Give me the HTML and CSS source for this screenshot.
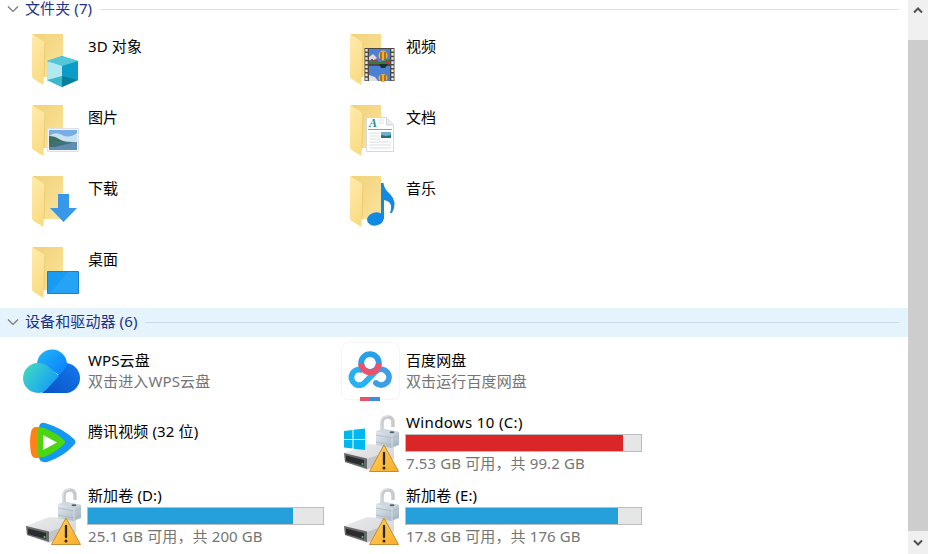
FILE: index.html
```html
<!DOCTYPE html>
<html lang="zh-CN">
<head>
  <meta charset="UTF-8">
  <title>此电脑</title>
  <link rel="stylesheet" href="styles.css">
</head>
<body>
  <!-- shared icon parts -->
  <svg class="defs" width="0" height="0">
    <defs>
      <linearGradient id="folderBack" x1="0" y1="0" x2="1" y2="1">
        <stop offset="0" stop-color="#f1d27a"/>
        <stop offset="1" stop-color="#fbe39a"/>
      </linearGradient>
      <linearGradient id="folderFront" x1="0" y1="0" x2="0.4" y2="1">
        <stop offset="0" stop-color="#ffebad"/>
        <stop offset="1" stop-color="#fadc85"/>
      </linearGradient>
      <linearGradient id="driveTop" x1="0" y1="0" x2="1" y2="1">
        <stop offset="0" stop-color="#ebecee"/>
        <stop offset="1" stop-color="#d0d2d5"/>
      </linearGradient>
      <linearGradient id="lockBody" x1="0" y1="0" x2="1" y2="1">
        <stop offset="0" stop-color="#e6edf2"/>
        <stop offset="1" stop-color="#a3b2be"/>
      </linearGradient>
      <linearGradient id="warnFill" x1="0" y1="0" x2="1" y2="1">
        <stop offset="0" stop-color="#ffd25a"/>
        <stop offset="1" stop-color="#f9ad2c"/>
      </linearGradient>
      <symbol id="folder" viewBox="0 0 64 64">
        <path d="M13 6H43V49H23Z" fill="url(#folderBack)"/>
        <path d="M23 49h4v5l-3 2z" fill="#fff"/>
        <path d="M12 6L23 13Q25 14 25 17L23.500 57L13.500 51Q12 50 12 48Z" fill="url(#folderFront)"/>
        <path d="M25 15L24 49" stroke="#e6c46c" stroke-width=".7"/>
      </symbol>
      <symbol id="drive" viewBox="0 0 64 64">
        <path d="M6 42L29 33L56 35V48L29 59L7 51Z" fill="url(#driveTop)"/>
        <path d="M29 48L40 44V54L29 58Z" fill="#c3c5c8"/>
        <path d="M6 42L29 47.500V58L7 51Z" fill="#66686a"/>
        <path d="M8 44.500L26 49V55L8 50Z" fill="#2a2c2e"/>
        <circle cx="24.500" cy="53" r="1" fill="#57c56b"/>
        <path d="M44 19V12Q44 6 50 6Q55 6 55 12V16" fill="none" stroke="#c8cbce" stroke-width="3.500"/>
        <path d="M43 18V12Q43 5 50 5" fill="none" stroke="#e4e6e8" stroke-width="1"/>
        <path d="M38 20L47 18L61 21V34L53 37L38 34Z" fill="url(#lockBody)"/>
        <path d="M38 20L47 18L61 21L54 23.500Z" fill="#cfd8df"/>
        <path d="M38 24L54 27L61 24.500M38 31L54 34L61 31.500" fill="none" stroke="#a3b4c1" stroke-width=".7"/>
        <path d="M54 24V36" stroke="#dbe6ee" stroke-width=".8"/>
        <ellipse cx="54" cy="21.300" rx="2.500" ry="1" fill="#4d6172"/>
        <path d="M46 34L60.500 60.500H31.500Z" fill="url(#warnFill)" stroke="#c88b31" stroke-linejoin="round"/>
        <path d="M46 42V53" stroke="#292522" stroke-width="2.300" stroke-linecap="round"/>
        <circle cx="46" cy="57" r="1.500" fill="#292522"/>
      </symbol>
    </defs>
  </svg>

  <div class="window">
    <main class="content">
      <div class="group-header">
        <svg class="chevron" viewBox="0 0 12 8"><path d="M1 1.500L6 6.500L11 1.500"/></svg>
        <h2>文件夹 (7)</h2>
        <span class="line"></span>
      </div>

      <div class="grid folders">
        <div class="tile">
          <svg class="icon" viewBox="0 0 64 64">
            <use href="#folder"/>
            <path d="M42 28L58 33V52L42 59L27 52V33Z" fill="#24a7c3"/>
            <path d="M27 33L42 37V49L27 53Z" fill="#b2e9f0"/>
            <path d="M42 37L58 33V52L42 49Z" fill="#0b9cc8"/>
            <path d="M27 33L42 28L58 33L42 38Z" fill="#54c6da"/>
            <path d="M27 52L42 48V59Z" fill="#3bb9ca"/>
            <path d="M42 48L58 52L42 59Z" fill="#087e9d"/>
          </svg>
          <div class="info"><div class="name">3D 对象</div></div>
        </div>

        <div class="tile">
          <svg class="icon" viewBox="0 0 64 64">
            <use href="#folder"/>
            <path d="M26.500 20H56.500V53H26.500Z" fill="#4b4845"/>
            <path d="M31 21H52V36H31ZM31 38H52V53H31Z" fill="#4b80d4"/>
            <path d="M31 33L36 31L41 34L52 31V36H31Z" fill="#377b43"/>
            <path d="M31 47L37 49L40 53H31Z" fill="#dce1ea"/>
            <path d="M31 29L35 26L39 30L36 32L31 32Z" fill="#e6d5dc"/>
            <path d="M33 32h2M38 33h2M47 34h4" stroke="#cc2849" stroke-width="1.800"/>
            <ellipse cx="45" cy="27.500" rx="4.500" ry="5" fill="#edb42e"/>
            <path d="M43 24v8M47 24v8" stroke="#7a291d"/>
            <ellipse cx="45" cy="50" rx="4.500" ry="4" fill="#edb42e"/>
            <path d="M43 47v6M47 47v6" stroke="#7a291d"/>
            <path d="M41 36h9l-3 4h-4z" fill="#17342b"/>
            <path d="M28.500 21V53M54.500 21V53" stroke="#e9e7e0" stroke-width="2.400" stroke-dasharray="2.600 1.500"/>
          </svg>
          <div class="info"><div class="name">视频</div></div>
        </div>

        <div class="tile">
          <svg class="icon" viewBox="0 0 64 64">
            <use href="#folder"/>
            <path d="M27.500 29.500H58.500V52.500H27.500Z" fill="#f4f4f4" stroke="#dde1e5"/>
            <path d="M29 31H57V43H29Z" fill="#78aee5"/>
            <path d="M29 37Q35 32 42 36T57 34V44H29Z" fill="#c9e2f2"/>
            <path d="M29 37Q35 37 39 40T52 43L29 46Z" fill="#3d7064"/>
            <path d="M29 44L57 43V51H29Z" fill="#5f8eb0"/>
            <path d="M29 44L55 43L35 48H29Z" fill="#406d78"/>
          </svg>
          <div class="info"><div class="name">图片</div></div>
        </div>

        <div class="tile">
          <svg class="icon" viewBox="0 0 64 64">
            <use href="#folder"/>
            <path d="M28.500 18.500H48.500L55.500 26V52.500H28.500Z" fill="#fff" stroke="#d6dadd"/>
            <path d="M48.500 18.500V26H55.500" fill="#e7ecef" stroke="#d0d7db"/>
            <path d="M40 21H46M40 24H46M31 34H42M31 37H42M31 40H42M31 43H53M31 46H53M31 49H53" stroke="#d6dce0" stroke-width=".9"/>
            <path d="M30 30.500H54" stroke="#73acc9"/>
            <text class="doc-letter" x="31" y="28">A</text>
            <path d="M43 33H53V39H43Z" fill="#70add4"/>
            <path d="M43 36L48 37L53 36V39H43Z" fill="#2a6e78"/>
          </svg>
          <div class="info"><div class="name">文档</div></div>
        </div>

        <div class="tile">
          <svg class="icon" viewBox="0 0 64 64">
            <use href="#folder"/>
            <path d="M38 24H49V38H57L43.500 52L30 38H38Z" fill="#3897e8"/>
          </svg>
          <div class="info"><div class="name">下载</div></div>
        </div>

        <div class="tile">
          <svg class="icon" viewBox="0 0 64 64">
            <use href="#folder"/>
            <ellipse cx="37.500" cy="49" rx="8.500" ry="6.500" transform="rotate(-15 37.500 49)" fill="#118ae3"/>
            <path d="M43 13H45.500Q46 19 52 24Q60 32 54 43H52Q56 32 46 30V49H43Z" fill="#118ae3"/>
          </svg>
          <div class="info"><div class="name">音乐</div></div>
        </div>

        <div class="tile">
          <svg class="icon" viewBox="0 0 64 64">
            <use href="#folder"/>
            <path d="M27.500 30.500H58.500V52.500H27.500Z" fill="#189cf3" stroke="#1681ca"/>
            <path d="M48 31H58V52H30Z" fill="#26a3f6"/>
          </svg>
          <div class="info"><div class="name">桌面</div></div>
        </div>
      </div>

      <div class="group-header active">
        <svg class="chevron" viewBox="0 0 12 8"><path d="M1 1.500L6 6.500L11 1.500"/></svg>
        <h2>设备和驱动器 (6)</h2>
        <span class="line"></span>
      </div>

      <div class="grid devices">
        <div class="tile">
          <svg class="icon" viewBox="0 0 64 64">
            <defs>
              <linearGradient id="cloudTop" x1="0" y1="0" x2="1" y2="1">
                <stop offset="0" stop-color="#22b8f6"/>
                <stop offset="1" stop-color="#087bff"/>
              </linearGradient>
              <linearGradient id="cloudLeft" x1="0" y1="0" x2="1" y2=".6">
                <stop offset="0" stop-color="#43dfbc"/>
                <stop offset="1" stop-color="#159cfa"/>
              </linearGradient>
              <linearGradient id="cloudRight" x1="1" y1="0" x2="0" y2="1">
                <stop offset="0" stop-color="#1679ed"/>
                <stop offset="1" stop-color="#0753c5"/>
              </linearGradient>
            </defs>
            <path d="M44 23A15 15 0 0 1 46 53H22L39 34Z" fill="url(#cloudRight)"/>
            <path d="M17 24A15 15 0 0 1 47 25Q46 29 39 35L28 28Z" fill="url(#cloudTop)"/>
            <path d="M18 23Q25 23 30 28L39 36L26 50Q23 53 18 53A15 15 0 0 1 18 23Z" fill="url(#cloudLeft)"/>
          </svg>
          <div class="info">
            <div class="name">WPS云盘</div>
            <div class="sub">双击进入WPS云盘</div>
          </div>
        </div>

        <div class="tile">
          <svg class="icon" viewBox="0 0 64 64">
            <rect x="3.500" y="2.500" width="58" height="57" rx="7" fill="#fff" stroke="#f5f5f7"/>
            <path d="M39 30L27.500 42A7.800 7.800 0 1 1 25 30.500" fill="none" stroke="#27b0f2" stroke-width="5.800"/>
            <path d="M38.500 31A7.800 7.800 0 1 1 38 43" fill="none" stroke="#3a9fe6" stroke-width="5.800" stroke-linecap="round"/>
            <circle cx="32" cy="23" r="8.800" fill="none" stroke="#279fe9" stroke-width="5.800"/>
            <path d="M23.200 23.500A8.800 8.800 0 0 0 40.800 23.500" fill="none" stroke="#ed5068" stroke-width="5.800"/>
            <path d="M22 57H32V61H22Z" fill="#ec5266"/>
            <path d="M32 57H42V61H32Z" fill="#3c8de0"/>
          </svg>
          <div class="info">
            <div class="name">百度网盘</div>
            <div class="sub">双击运行百度网盘</div>
          </div>
        </div>

        <div class="tile">
          <svg class="icon" viewBox="0 0 64 64">
            <path d="M19 17Q19 11 25 12Q42 17 54 28Q57 31 54 34Q43 46 27 51Q19 52 19 46Z" fill="#1598ef"/>
            <path d="M11 21Q12 16 16 16H20V47H16Q12 47 11 42Q9 31 11 21Z" fill="#ff8214"/>
            <path d="M18 18Q19 15 24 17Q35 21 44 29Q46 31 44 33Q35 42 24 46Q19 47 18 44Z" fill="#4bd710"/>
            <path d="M23 24L37 31.500L23 39Z" fill="#fff"/>
          </svg>
          <div class="info"><div class="name">腾讯视频 (32 位)</div></div>
        </div>

        <div class="tile drive">
          <svg class="icon" viewBox="0 0 64 64">
            <use href="#drive"/>
            <path d="M6 20L14.500 19V28H6ZM15.500 18.800L27 17.500V28H15.500ZM6 29H14.500V37.500L6 36.500ZM15.500 29H27V39L15.500 37.700Z" fill="#00b8f0"/>
          </svg>
          <div class="info">
            <div class="name latin">Windows 10 (C:)</div>
            <div class="bar"><div class="used full" style="width: 92.4%"></div></div>
            <div class="sub">7.53 GB 可用，共 99.2 GB</div>
          </div>
        </div>

        <div class="tile drive">
          <svg class="icon" viewBox="0 0 64 64"><use href="#drive"/></svg>
          <div class="info">
            <div class="name">新加卷 (D:)</div>
            <div class="bar"><div class="used" style="width: 87.4%"></div></div>
            <div class="sub">25.1 GB 可用，共 200 GB</div>
          </div>
        </div>

        <div class="tile drive">
          <svg class="icon" viewBox="0 0 64 64"><use href="#drive"/></svg>
          <div class="info">
            <div class="name">新加卷 (E:)</div>
            <div class="bar"><div class="used" style="width: 90.2%"></div></div>
            <div class="sub">17.8 GB 可用，共 176 GB</div>
          </div>
        </div>
      </div>
    </main>

    <div class="scrollbar">
      <svg class="arrow up" viewBox="0 0 10 8"><path d="M1 6.500L5 2.500L9 6.500"/></svg>
      <div class="thumb"></div>
      <svg class="arrow down" viewBox="0 0 10 8"><path d="M1 1.500L5 5.500L9 1.500"/></svg>
    </div>
  </div>
</body>
</html>
```

FILE: styles.css
```css
* {
  box-sizing: border-box;
}
body {
  margin: 0;
  overflow: hidden;
  background-color: #fff;
  font-family: "Noto Sans", "Noto Sans CJK SC", sans-serif;
  font-size: 15px;
  color: #000;
}
.defs {
  display: block;
}
.window {
  display: flex;
  height: 554px;
}
.content {
  width: 908px;
}
.group-header {
  display: flex;
  align-items: center;
  height: 25px;
  padding: 0 9px 7px 7px;
  color: #1e3287;
}
.group-header.active {
  height: 29px;
  padding-bottom: 1px;
  background-color: #e5f3fd;
}
.group-header h2 {
  margin: 0 8px 0 6px;
  padding-bottom: 2px;
  font-size: 15px;
  font-weight: normal;
  line-height: 18px;
  letter-spacing: 0.1px;
  white-space: nowrap;
}
.active h2 {
  padding-bottom: 3px;
}
.chevron {
  width: 12px;
  height: 8px;
  fill: none;
  stroke: #777;
  stroke-width: 1.2;
}
.line {
  flex: 1;
  height: 1px;
  background-color: #e2e2e2;
}
.active .line {
  background-color: #c9dbe8;
}
.grid {
  display: grid;
  grid-template-columns: 318px 318px;
  padding-left: 20px;
}
.folders {
  grid-template-rows: repeat(4, 71px);
  height: 283px;
}
.devices {
  grid-template-rows: 71px 73px 73px;
}
.tile {
  display: flex;
  padding-top: 3px;
}
.icon {
  flex: none;
  width: 64px;
  height: 64px;
}
.doc-letter {
  font-family: "Liberation Serif", serif;
  font-size: 12px;
  font-style: italic;
  font-weight: bold;
  fill: #238aa1;
}
.info {
  width: 237px;
  margin-left: 3px;
  padding-top: 8px;
  white-space: nowrap;
}
.devices .info {
  padding-top: 10px;
}
.name, .sub {
  height: 21px;
  padding-left: 1px;
  line-height: 21px;
  letter-spacing: 0.12px;
}
.name.latin {
  letter-spacing: 0.35px;
}
.sub {
  color: #757575;
}
.devices .drive .info {
  padding-top: 0;
}
.drive .name {
  padding-top: 1px;
}
.bar {
  height: 18px;
  margin: 2px 0 1px;
  border: 1px solid #bcbcbc;
  background-color: #e6e6e6;
}
.used {
  height: 100%;
  background-color: #26a0da;
}
.used.full {
  background-color: #da2626;
}
.scrollbar {
  display: flex;
  flex-direction: column;
  align-items: center;
  width: 20px;
  background-color: #f0f0f0;
}
.arrow {
  width: 10px;
  height: 8px;
  fill: none;
  stroke: #505050;
  stroke-width: 2;
}
.up {
  margin: 6px 0 26px;
}
.thumb {
  width: 100%;
  height: 491px;
  background-color: #cdcdcd;
}
.down {
  margin-top: 8px;
}
```
